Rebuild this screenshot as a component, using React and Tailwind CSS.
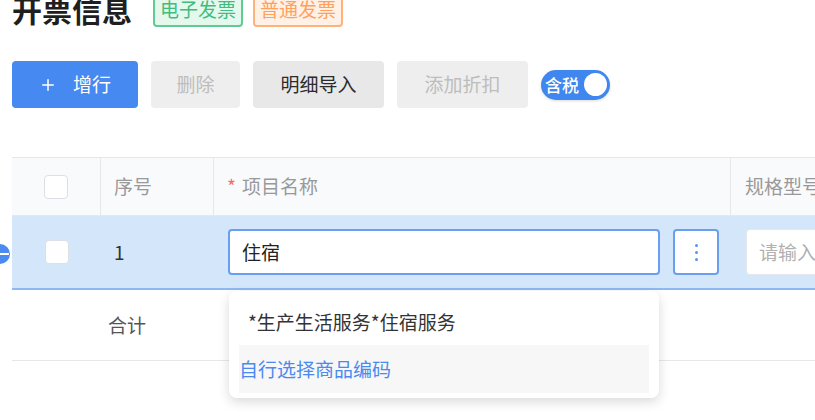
import { Plus } from "lucide-react";

const font = { fontFamily: '"Noto Sans CJK SC", "Noto Sans", sans-serif' };

const Checkbox = () => (
  <div className="w-[24px] h-[24px] rounded-[4px] border border-[#dcdfe6] bg-white" />
);

const App = () => {
  return (
    <div
      className="relative w-[815px] h-[420px] overflow-hidden bg-white text-[#333]"
      style={font}
    >
      <div className="pl-[12px]">
        {/* title */}
        <div className="flex items-center h-[40px] -mt-[11px] gap-[21px]">
          <h1 className="text-[30px] font-bold text-[#1f1f1f] leading-none">开票信息</h1>
          <div className="flex items-center gap-[10px]">
            <span className="h-[36px] px-[5px] flex items-center rounded-[4px] border-2 border-[#5fcc94] bg-[#e4f8ee] text-[#3fbd7c] text-[19px]">
              电子发票
            </span>
            <span className="h-[36px] px-[5px] flex items-center rounded-[4px] border-2 border-[#ffb37a] bg-[#fff1e6] text-[#ffa15c] text-[19px]">
              普通发票
            </span>
          </div>
        </div>

        {/* toolbar */}
        <div className="flex items-center gap-[13px] mt-[32px]">
          <button className="w-[126px] h-[47px] rounded-[4px] bg-[#4689f1] text-white text-[19px] flex items-center justify-center gap-[16px]">
            <Plus size={18} strokeWidth={2} />
            增行
          </button>
          <button className="w-[89px] h-[47px] rounded-[4px] bg-[#eeeeee] text-[#bdbdbd] text-[19px]">
            删除
          </button>
          <button className="w-[131px] h-[47px] rounded-[4px] bg-[#e8e8e8] text-[#2b2b2b] text-[19px]">
            明细导入
          </button>
          <button className="w-[131px] h-[47px] rounded-[4px] bg-[#eeeeee] text-[#bdbdbd] text-[19px]">
            添加折扣
          </button>
          <div className="w-[69px] h-[30px] rounded-full bg-[#3f86ef] flex items-center justify-between pl-[4px] pr-[3px] shadow-[0_1px_3px_rgba(0,0,0,0.15)]">
            <span className="text-white text-[17px] font-medium leading-none">含税</span>
            <span className="w-[23px] h-[23px] rounded-full bg-white" />
          </div>
        </div>

        {/* table */}
        <div className="mt-[49px] w-[900px] text-[19px]">
          <div className="flex h-[59px] bg-[#f9fafc] border-t border-[#e5e7eb] border-b border-b-[#e5e7eb] text-[#999]">
            <div className="w-[89px] flex items-center justify-center border-r border-[#e5e7eb]">
              <Checkbox />
            </div>
            <div className="w-[113px] flex items-center pl-[13px] border-r border-[#e5e7eb]">序号</div>
            <div className="w-[517px] flex items-center pl-[13px] border-r border-[#e5e7eb]">
              <span className="text-[#f56c6c] mr-[6px]">*</span>项目名称
            </div>
            <div className="flex-1 flex items-center pl-[14px]">规格型号</div>
          </div>

          <div className="relative flex h-[74px] bg-[#d3e6fa] border-b-2 border-[#8fb8f2]">
            <div className="w-[89px] flex items-center justify-center">
              <Checkbox />
            </div>
            <div className="w-[113px] flex items-center pl-[13px] text-[#333]">1</div>
            <div className="w-[517px] flex items-center pl-[14px] pr-[12px] gap-[13px]">
              <div className="flex-1 h-[46px] rounded-[4px] border-2 border-[#6a9ef0] bg-white flex items-center px-[12px] text-[#222]">
                住宿
              </div>
              <div className="w-[46px] h-[46px] rounded-[4px] border-2 border-[#6a9ef0] bg-white flex flex-col items-center justify-center gap-[4px]">
                <span className="w-[3px] h-[3px] rounded-full bg-[#5b93ee]" />
                <span className="w-[3px] h-[3px] rounded-full bg-[#5b93ee]" />
                <span className="w-[3px] h-[3px] rounded-full bg-[#5b93ee]" />
              </div>
            </div>
            <div className="flex-1 flex items-center pl-[15px]">
              <div className="w-[120px] h-[46px] rounded-[4px] bg-white border border-[#e5e7eb] flex items-center px-[12px] text-[#b0b0b0]">
                请输入
              </div>
            </div>
          </div>

          <div className="flex h-[71px] border-b border-[#e5e7eb]">
            <div className="w-[89px]" />
            <div className="w-[113px] flex items-center pl-[7px] text-[#555]">合计</div>
          </div>
        </div>
      </div>

      {/* row remove handle */}
      <div className="absolute left-[-10px] top-[244px] w-[20px] h-[20px] rounded-full bg-[#4b8bf0] flex items-center justify-center">
        <span className="w-[10px] h-[2px] bg-white ml-[8px]" />
      </div>

      {/* autocomplete dropdown */}
      <div className="absolute left-[229px] top-[291px] w-[430px] h-[107px] rounded-[8px] bg-white shadow-[0_4px_12px_rgba(0,0,0,0.15)] py-[8px] px-[10px] text-[19px]">
        <div className="h-[46px] flex items-center pl-[9px] text-[#333]">*生产生活服务*住宿服务</div>
        <div className="h-[48px] flex items-center bg-[#f7f7f7] text-[#4a8af0]">自行选择商品编码</div>
      </div>
    </div>
  );
};

export default App;
